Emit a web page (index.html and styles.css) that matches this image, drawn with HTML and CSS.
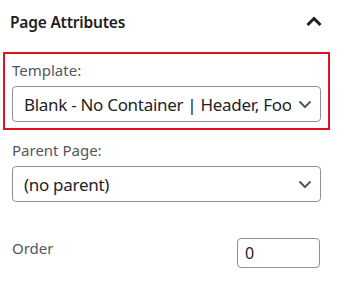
FILE: index.html
```html
<!DOCTYPE html>
<html>
<head>
<meta charset="utf-8">
<link rel="stylesheet" href="styles.css">
</head>
<body>
<div class="panel">
  <div class="header">
    <h2 class="title">Page Attributes</h2>
    <svg class="toggle" width="24" height="24" viewBox="0 0 24 24"><path d="M5.5 15 L12 8.5 L18.5 15" fill="none" stroke="#1e1e1e" stroke-width="3"/></svg>
  </div>
  <div class="template-box">
    <div class="label">Template:</div>
    <div class="select">
      <span class="select-text">Blank - No Container | Header, Footer</span>
      <svg class="chev" width="14" height="9" viewBox="0 0 14 9"><path d="M1.5 1.5 L7 7 L12.5 1.5" fill="none" stroke="#50575e" stroke-width="2"/></svg>
    </div>
  </div>
  <div class="field">
    <div class="label">Parent Page:</div>
    <div class="select">
      <span class="select-text">(no parent)</span>
      <svg class="chev" width="14" height="9" viewBox="0 0 14 9"><path d="M1.5 1.5 L7 7 L12.5 1.5" fill="none" stroke="#50575e" stroke-width="2"/></svg>
    </div>
  </div>
  <div class="order-row">
    <span class="order-label">Order</span>
    <div class="num-input">0</div>
  </div>
</div>
</body>
</html>
```

FILE: styles.css
```css
*, *::before, *::after {
  box-sizing: border-box;
}
html, body {
  margin: 0;
  padding: 0;
  background: #fff;
}
body {
  font-family: "Noto Sans", "Open Sans", sans-serif;
  color: #1e1e1e;
}
.panel {
  width: 337px;
}
.header {
  display: flex;
  align-items: center;
  justify-content: space-between;
  height: 44px;
  padding: 0 11px 0 10px;
  margin-bottom: 8px;
}
.title {
  margin: 0;
  font-size: 15.5px;
  line-height: 22px;
  font-weight: 600;
  letter-spacing: -0.2px;
  color: #1e1e1e;
}
.toggle {
  display: block;
}
.template-box {
  margin-left: 3px;
  width: 327px;
  height: 78px;
  border: 2px solid #e0121f;
  padding: 6px 7px 6px 7px;
}
.label {
  font-size: 15px;
  color: #50575e;
  line-height: 20px;
  margin-bottom: 6px;
}
.select {
  display: flex;
  align-items: center;
  justify-content: space-between;
  height: 36px;
  border: 1px solid #8c8f94;
  border-radius: 4px;
  padding: 0 8px 0 11px;
  overflow: hidden;
}
.select-text {
  font-size: 17px;
  letter-spacing: -0.3px;
  white-space: nowrap;
  overflow: hidden;
  flex: 1;
  min-width: 0;
  color: #1d2327;
  margin-right: 7px;
}
.chev {
  flex: none;
  display: block;
}
.field {
  padding: 10px 16px 0 12px;
}
.order-row {
  display: flex;
  align-items: flex-start;
  justify-content: space-between;
  padding: 36px 17px 0 12px;
}
.order-label {
  font-size: 15px;
  line-height: 20px;
  color: #50575e;
}
.num-input {
  width: 83px;
  height: 30px;
  border: 1px solid #8c8f94;
  border-radius: 4px;
  font-size: 16px;
  line-height: 28px;
  padding-left: 7px;
  color: #1d2327;
}
```
